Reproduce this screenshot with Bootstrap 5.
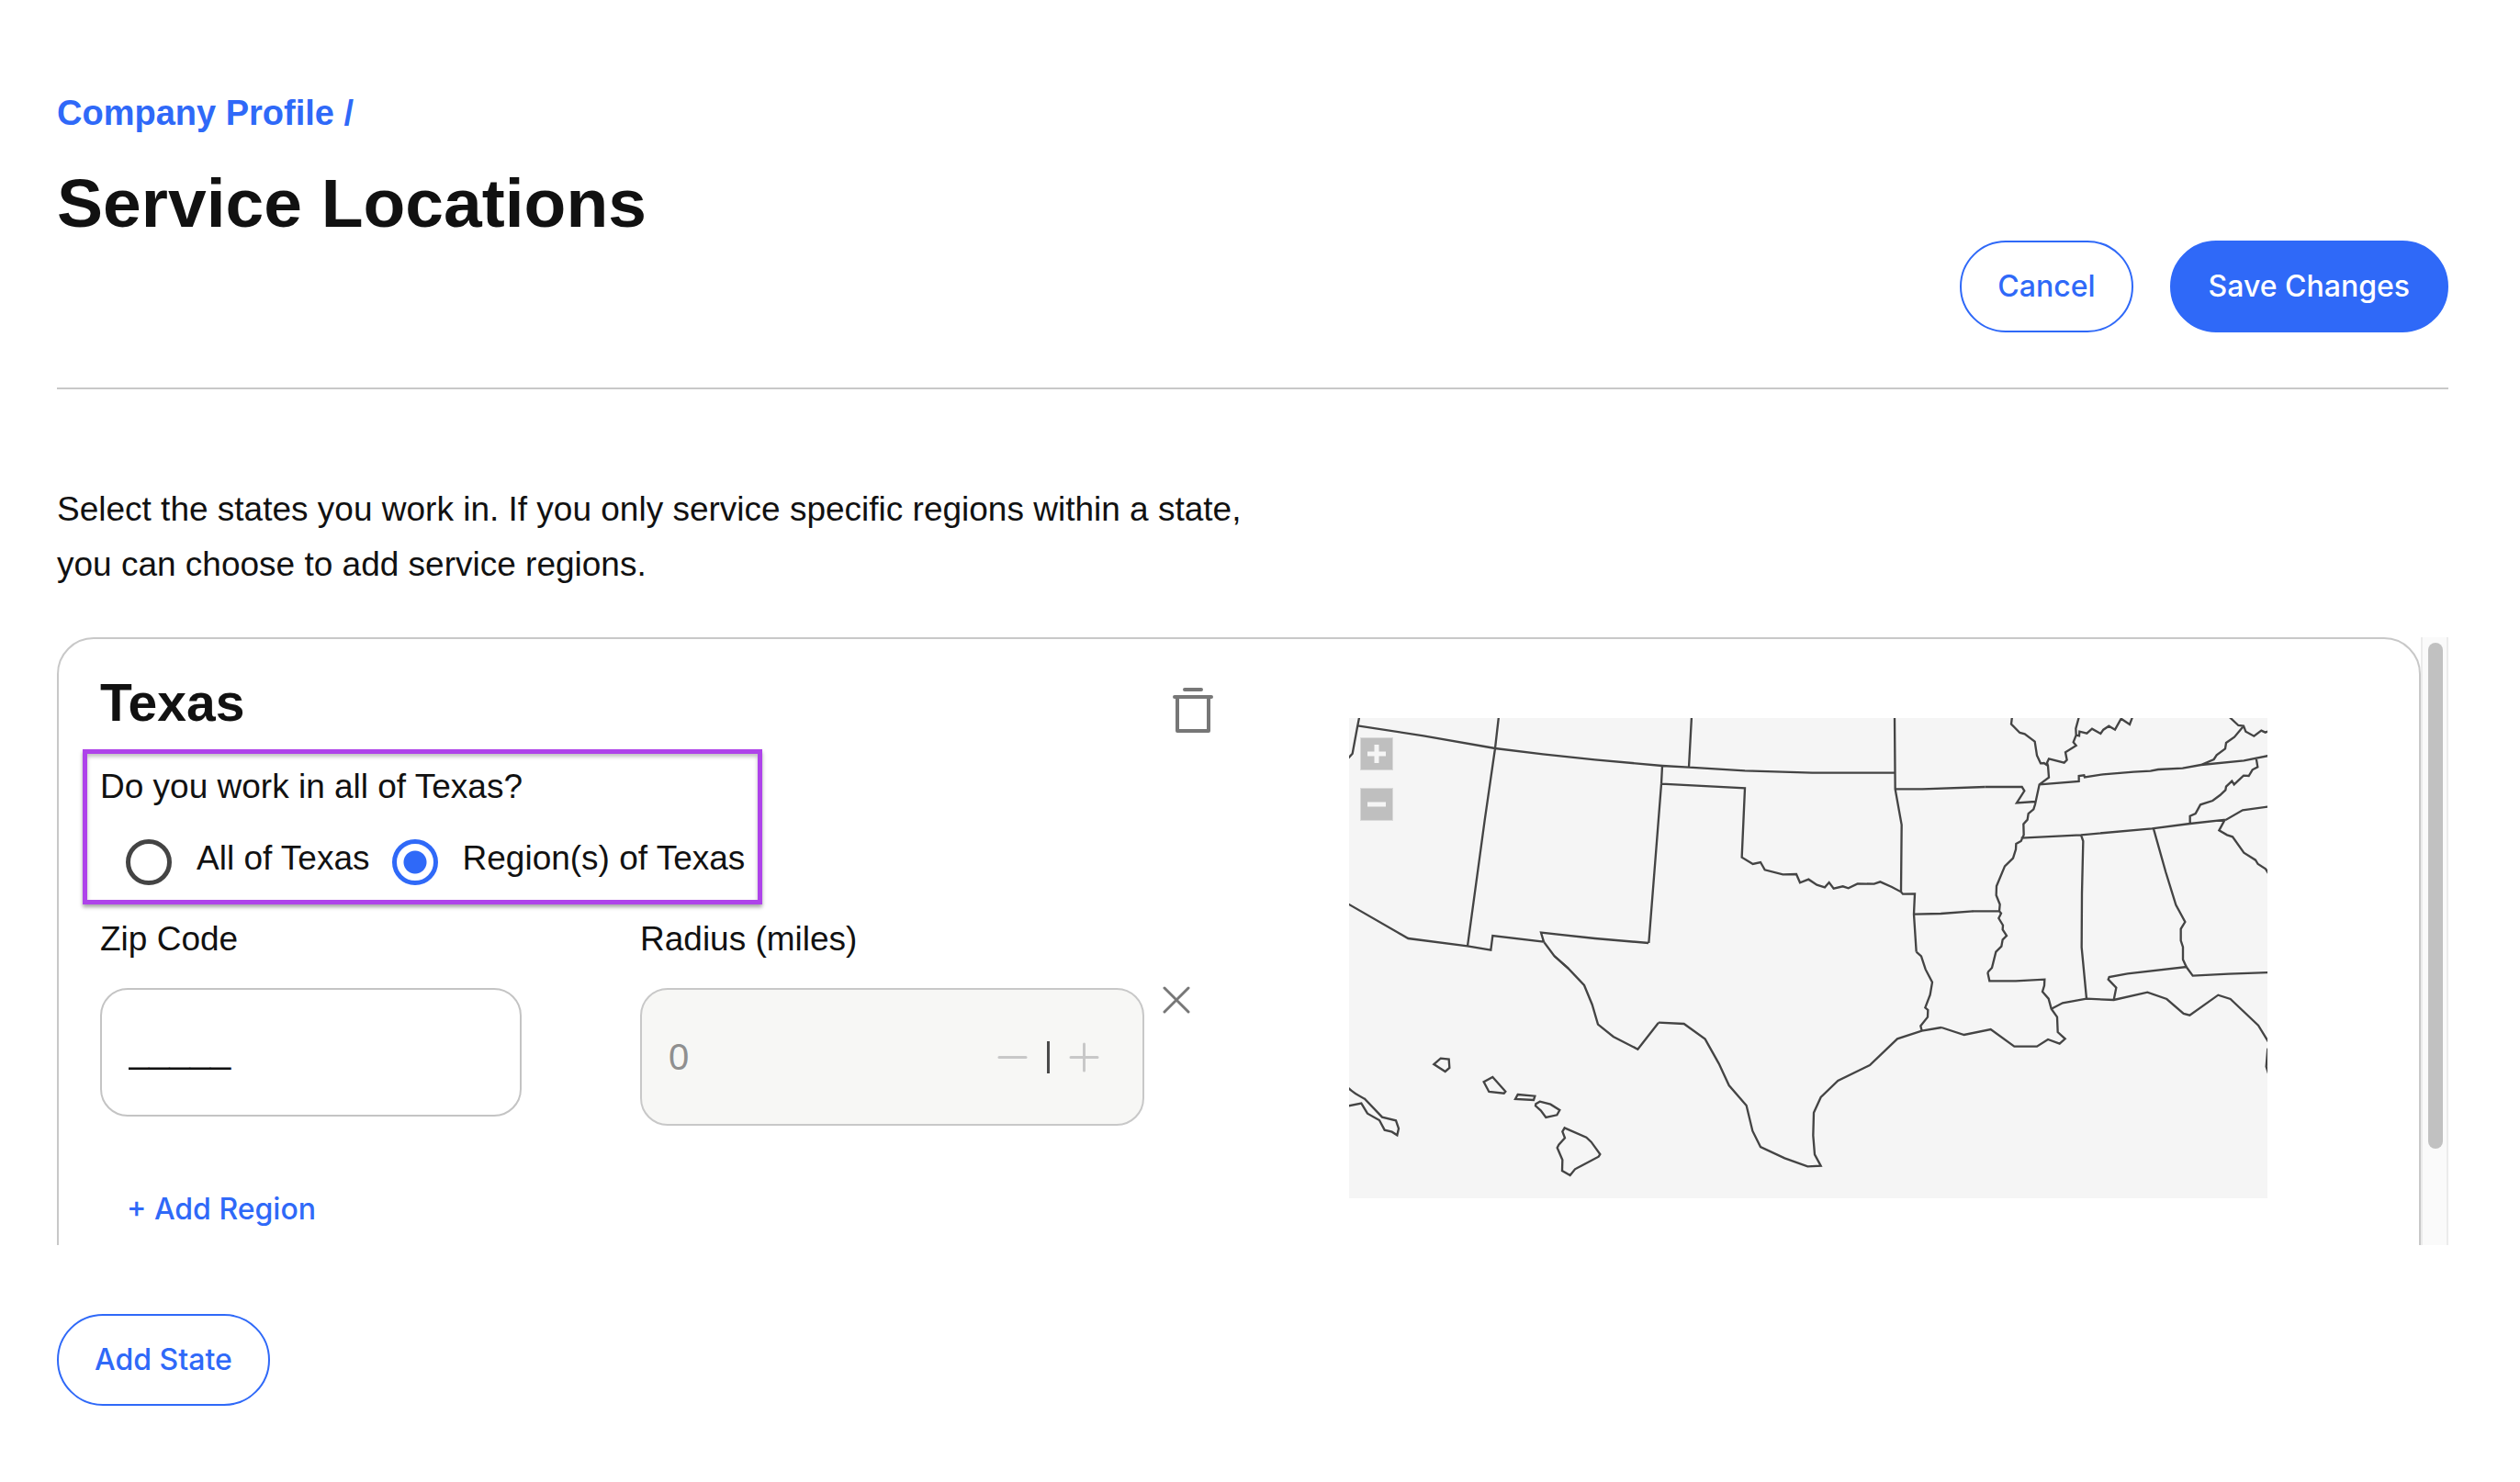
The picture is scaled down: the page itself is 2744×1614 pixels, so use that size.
<!DOCTYPE html>
<html lang="en">
<head>
<meta charset="utf-8">
<meta name="viewport" content="width=device-width, initial-scale=1">
<title>Service Locations</title>
<link href="https://cdn.jsdelivr.net/npm/bootstrap@5.3.0/dist/css/bootstrap.min.css" rel="stylesheet">
<style>
  :root { --brand: #2f69f8; --ink: #111; --line: #c8c8c8; --gray: #777; }
  body { font-family: "Liberation Sans", Arial, sans-serif; font-size: 37px; line-height: 44px; color: var(--ink); background: #fff; }
  .page { padding: 93px 78px 84px 62px; }
  .crumb { font-size: 38px; line-height: 60px; font-weight: 700; color: var(--brand); text-decoration: none; }
  .page-title { font-size: 75px; line-height: 90px; font-weight: 700; margin: 23px 0 0; }
  .page-head { padding-bottom: 60px; border-bottom: 2px solid var(--line); }
  .head-actions { padding-top: 169px; gap: 40px; }
  .btn-pill { --bs-btn-font-family: Inter, "Liberation Sans", sans-serif; --bs-btn-font-size: 32px; --bs-btn-font-weight: 500; --bs-btn-line-height: 48px; --bs-btn-padding-x: 39px; --bs-btn-padding-y: 24px; --bs-btn-border-width: 2px; --bs-btn-border-radius: 50px; --bs-btn-border-color: var(--brand); --bs-btn-color: var(--brand); --bs-btn-bg: #fff; }
  .btn-pill-solid { --bs-btn-color: #fff; --bs-btn-bg: var(--brand); --bs-btn-padding-x: 40px; }
  .intro { max-width: 1320px; line-height: 60px; margin: 101px 0 49px; }
  .state-scroll { height: 662px; overflow: hidden; }
  .state-panel { border: 2px solid var(--line); border-radius: 40px; min-height: 900px; }
  .scroll-track { width: 30px; padding: 6px; background: #fafafa; border: solid #ebebeb; border-width: 0 2px; }
  .scroll-thumb { height: 551px; width: 16px; border-radius: 8px; background: #c1c1c1; }
  .state-form { padding: 39px 28px 0 45px; }
  .state-name { font-size: 57px; line-height: 60px; font-weight: 700; margin: 0 0 4px; }
  .icon-btn { background: none; border: 0; padding: 0; line-height: 0; color: var(--gray); }
  .region-choice { width: 740px; max-width: 100%; margin: 17px 0 16px -19px; padding: 14px 14px 16px; border: 5px solid #ae43ea; box-shadow: 0 3px 4px rgba(0,0,0,.35), inset 0 3px 4px rgba(0,0,0,.25); }
  .region-question { margin: 0 0 31px; }
  .choices { padding-left: 28px; }
  .choice-label { line-height: 50px; margin: 0 0 4px 27px; white-space: nowrap; }
  .choice-radio { appearance: none; flex: none; width: 50px; height: 50px; margin: 4px 0 0; border: 5px solid #444; border-radius: 50%; background: #fff; }
  .choice-radio:checked { border-color: var(--brand); background: radial-gradient(circle, var(--brand) 12px, #fff 13px); }
  .field-label { margin-bottom: 31px; }
  .zip-col { width: 459px; margin-right: 129px; }
  .radius-col { width: 549px; }
  .field-zip { height: 140px; font-size: 40px; color: var(--ink); border: 2px solid #c4c4c4; border-radius: 30px; padding: 0 29px 6px; }
  .stepper { height: 150px; border: 2px solid var(--line); border-radius: 30px; background: #f7f7f5; padding: 0 47px 0 29px; gap: 21px; }
  .stepper input { flex: 1; min-width: 0; border: 0; padding: 0; background: none; color: #8f8f8f; font-size: 40px; }
  .stepper .icon-btn { color: var(--line); }
  .step-divider { width: 3px; height: 35px; background: #4a4a4a; }
  .remove-btn { margin: 73px 0 0 20px; }
  .add-region { font: 500 32px/44px Inter, "Liberation Sans", sans-serif; color: var(--brand); background: none; border: 0; padding: 0; margin: 69px 0 0 29px; }
  .map-col { padding: 86px 165px 0 120px; }
  .map-box { background: #f5f5f5; }
  .map-zoom { top: 21px; left: 12px; gap: 19px; }
  .map-zoom button { width: 36px; height: 36px; background: #bfbfbf; border: 1px solid #d9d9d9; padding: 0; line-height: 0; color: #f5f5f5; }
  .add-state { margin-top: 75px; }
</style>
</head>
<body>
<main class="page">
  <header class="page-head d-flex justify-content-between align-items-start">
    <div>
      <a class="crumb d-block" href="#profile">Company Profile /</a>
      <h1 class="page-title">Service Locations</h1>
    </div>
    <div class="head-actions d-flex">
      <button type="button" class="btn btn-pill">Cancel</button>
      <button type="button" class="btn btn-pill btn-pill-solid">Save Changes</button>
    </div>
  </header>

  <p class="intro">Select the states you work in. If you only service specific regions within a state, you can choose to add service regions.</p>

  <div class="state-scroll d-flex">
    <section class="state-panel flex-grow-1">
      <div class="row g-0">
        <form class="state-form col-6">
          <div class="d-flex justify-content-between align-items-end">
            <h2 class="state-name">Texas</h2>
            <button type="button" class="icon-btn" aria-label="Delete state">
              <svg width="44" height="52" viewBox="0 0 44 52" fill="none" stroke="currentColor" stroke-width="4" stroke-linecap="round" stroke-linejoin="round"><path d="M13 4H31M2 12H42M5 12V49H39V12"/></svg>
            </button>
          </div>

          <div class="region-choice" role="radiogroup" aria-labelledby="coverage-question">
            <p class="region-question" id="coverage-question">Do you work in all of Texas?</p>
            <div class="choices d-flex align-items-start">
              <input class="choice-radio" type="radio" name="coverage" id="cover-all">
              <label class="choice-label" for="cover-all">All of Texas</label>
              <input class="choice-radio ms-4" type="radio" name="coverage" id="cover-regions" checked>
              <label class="choice-label" for="cover-regions">Region(s) of Texas</label>
            </div>
          </div>

          <div class="d-flex align-items-start">
            <div class="zip-col">
              <label class="field-label d-block" for="zip">Zip Code</label>
              <input class="field-zip w-100 d-block" id="zip" type="text" value="_____">
            </div>
            <div class="radius-col">
              <label class="field-label d-block" for="radius">Radius (miles)</label>
              <div class="stepper d-flex align-items-center">
                <input id="radius" type="text" value="0" disabled>
                <button type="button" class="icon-btn" aria-label="Decrease radius" disabled><svg width="33" height="33" viewBox="0 0 33 33" stroke="currentColor" stroke-width="3" stroke-linecap="round"><path d="M2 16.500H31"/></svg></button>
                <span class="step-divider"></span>
                <button type="button" class="icon-btn" aria-label="Increase radius" disabled><svg width="33" height="33" viewBox="0 0 33 33" stroke="currentColor" stroke-width="3" stroke-linecap="round"><path d="M2 16.500H31M16.500 2V31"/></svg></button>
              </div>
            </div>
            <button type="button" class="icon-btn remove-btn" aria-label="Remove region"><svg width="30" height="30" viewBox="0 0 30 30" stroke="currentColor" stroke-width="3" stroke-linecap="round"><path d="M2 2L28 28M28 2L2 28"/></svg></button>
          </div>
          <button type="button" class="add-region">+ Add Region</button>
        </form>

        <div class="map-col col-6">
          <div class="map-box position-relative">
            <svg class="d-block w-100" viewBox="0 0 3000 1569" fill="none" stroke="#444" stroke-width="7" role="img" aria-label="Map of the southern United States">
              <!-- Arizona, New Mexico -->
              <g transform="translate(-57 -66)"><path d="M91 60L84 95 68 182 50 202M85 91L300 124 534 165 690 184 860 202 1080 222M546 60L534 165 500 400 444 811M50 671L250 786 444 811 520 824 526 777 693 797 684 767 860 786 1035 801M684 767L693 797 727 843 773 884"/></g>
              <!-- Oklahoma, Kansas, northern Texas -->
              <g transform="translate(933 -66)"><path d="M90 222L177 227 360 238 580 245 853 245M186 60L177 227M90 222L87 281 46 801M87 281L360 295 350 521 386 543 411 537 425 562 484 577 528 576 540 604 568 593 595 611 621 619 635 603 650 623 680 616 698 622 728 607 782 608 802 601 840 618 870 634 876 641 915 640 912 707 920 830M849 60L851 298 872 415 870 634M851 298L940 298 1145 291M912 707L1000 705 1105 697"/></g>
              <!-- Arkansas to the Carolinas -->
              <g transform="translate(1923 -66)"><path d="M155 291L275 291 283 304 258 343 318 339M243 60L240 86 268 114 284 118 317 143 324 188 336 214 347 213 360 222 363 260 332 283 318 348 313 364 296 378 293 398 280 412 281 448 272 468 256 477 255 495 246 524 219 550 192 615 191 645 203 675 201 697 207 704 199 720 213 743 212 757 225 777 212 790 208 812 190 830 177 882 163 897M360 222L357 212 363 199 413 212 422 203 417 178 452 156 443 145 452 122 451 100 462 60M452 122L462 124 463 110 487 116 504 101 532 117 541 104 559 92 579 104 599 68 627 87 637 60M332 283L461 273 461 255 478 253 480 259 540 250 640 242 695 239 720 234 800 230 860 219 1000 205 1085 188M950 60L982 90 999 92 1006 110 1033 125 1057 107 1070 113 1085 107M999 92L969 128 942 147 939 166 911 187 902 201 860 219M1040 196L1045 226 1028 235 1016 255 999 254 968 283 961 272 942 290 940 301 922 318 898 336 858 349 842 378 824 386 824 411M272 458L468 448 700 427 824 411 942 398 996 367 1085 355M938 398L919 433 945 448 963 454 1000 506 1038 530 1046 543 1071 559 1082 577M468 448L475 468 471 640 470 815 486 983M705 428L745 570 778 677 808 732 794 755 794 793 801 814 801 855 812 879M113 697L201 697"/></g>
              <!-- Rio Grande and Hawaii -->
              <g transform="translate(-57 714)"><path d="M727 63L773 104 825 159 851 222 870 287 920 327 1000 368 1068 281M356 398L383 401 385 429 371 441 334 417ZM526 459L568 506 563 512 514 507 497 475ZM608 516L664 521 660 534 600 531ZM680 539L715 548 745 567 736 583 700 591 683 568 666 553 667 547ZM761 625L832 656 848 671 877 711 872 719 795 760 779 780 753 765 754 730 737 690 742 680 762 658 754 637ZM50 490C70 512 88 520 108 530L165 590 210 601 219 627 214 649 197 638 173 632 156 600 117 578 97 545 50 554"/></g>
              <!-- Texas coast -->
              <g transform="translate(933 714)"><path d="M78 281L161 285 230 335 275 415 308 486 365 552 385 635 411 687 490 724 565 751 608 749 588 712 583 650 585 575 608 525 664 471 768 420 858 334 938 308 1002 297M920 50L936 64 950 107 972 149 965 190 949 232 958 240 957 263 934 292 938 308"/></g>
              <!-- Gulf coast -->
              <g transform="translate(1923 714)"><path d="M163 117L169 145 255 145 349 140 348 160 342 180 362 203 371 236 390 263 392 312 416 334 398 350 360 336 324 359 250 359 173 303 86 321 12 297M371 236L408 217 486 203 575 207 685 182 748 204 803 252 823 257 916 191 956 204 1047 290 1085 352M575 207L583 167 557 140 560 132 620 121 812 99 833 128 950 122 1085 117M1078 365L1073 425 1080 447"/></g>
            </svg>
            <div class="map-zoom position-absolute d-flex flex-column">
              <button type="button" aria-label="Zoom in"><svg width="20" height="20" stroke="currentColor" stroke-width="5"><path d="M0 10H20M10 0V20"/></svg></button>
              <button type="button" aria-label="Zoom out"><svg width="20" height="20" stroke="currentColor" stroke-width="5"><path d="M0 10H20"/></svg></button>
            </div>
          </div>
        </div>
      </div>
    </section>
    <div class="scroll-track flex-shrink-0" aria-hidden="true"><div class="scroll-thumb"></div></div>
  </div>

  <button type="button" class="btn btn-pill add-state">Add State</button>
</main>
<script src="https://cdn.jsdelivr.net/npm/bootstrap@5.3.0/dist/js/bootstrap.bundle.min.js"></script>
</body>
</html>
